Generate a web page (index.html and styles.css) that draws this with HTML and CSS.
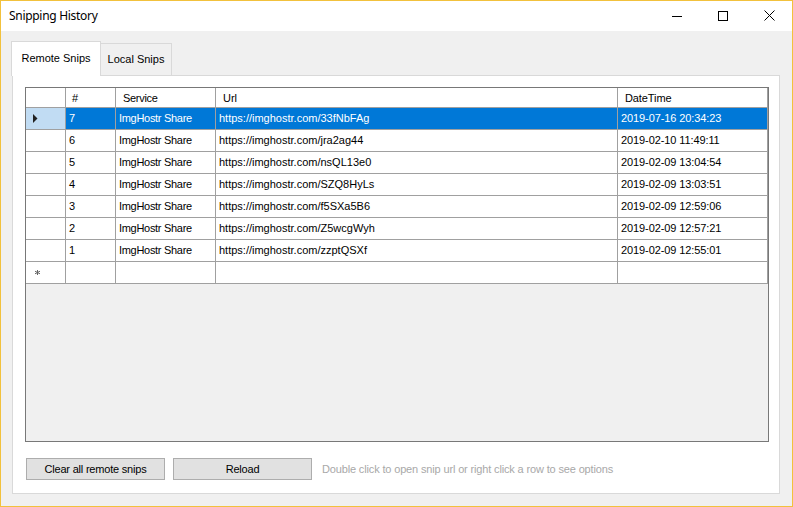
FILE: index.html
```html
<!DOCTYPE html>
<html>
<head>
<meta charset="utf-8">
<link rel="stylesheet" href="styles.css">
</head>
<body>
<div class="window">
  <div class="titlebar">
    <div class="title">Snipping History</div>
    <div class="caption-buttons">
      <div class="cbtn"><svg width="10" height="10" viewBox="0 0 10 10"><path d="M0 5.5H10" stroke="#000" stroke-width="1"/></svg></div>
      <div class="cbtn"><svg width="10" height="10" viewBox="0 0 10 10"><rect x="0.5" y="0.5" width="9" height="9" fill="none" stroke="#000" stroke-width="1"/></svg></div>
      <div class="cbtn"><svg width="11" height="11" viewBox="0 0 11 11"><path d="M0.5 0.5L10.5 10.5M10.5 0.5L0.5 10.5" stroke="#000" stroke-width="1"/></svg></div>
    </div>
  </div>
  <div class="client">
    <div class="tabstrip">
      <div class="tab active">Remote Snips</div>
      <div class="tab">Local Snips</div>
    </div>
    <div class="tabpage">
      <div class="grid">
        <div class="table">
          <div class="row header">
            <div class="cell rh"></div>
            <div class="cell c1">#</div>
            <div class="cell c2">Service</div>
            <div class="cell c3">Url</div>
            <div class="cell c4">DateTime</div>
          </div>
          <div class="row selected">
            <div class="cell rh"><svg width="5" height="9" viewBox="0 0 5 9"><path d="M0 0L4.5 4.5L0 9Z" fill="#222"/></svg></div>
            <div class="cell c1">7</div>
            <div class="cell c2">ImgHostr Share</div>
            <div class="cell c3">https://imghostr.com/33fNbFAg</div>
            <div class="cell c4">2019-07-16 20:34:23</div>
          </div>
          <div class="row">
            <div class="cell rh"></div>
            <div class="cell c1">6</div>
            <div class="cell c2">ImgHostr Share</div>
            <div class="cell c3">https://imghostr.com/jra2ag44</div>
            <div class="cell c4">2019-02-10 11:49:11</div>
          </div>
          <div class="row">
            <div class="cell rh"></div>
            <div class="cell c1">5</div>
            <div class="cell c2">ImgHostr Share</div>
            <div class="cell c3">https://imghostr.com/nsQL13e0</div>
            <div class="cell c4">2019-02-09 13:04:54</div>
          </div>
          <div class="row">
            <div class="cell rh"></div>
            <div class="cell c1">4</div>
            <div class="cell c2">ImgHostr Share</div>
            <div class="cell c3">https://imghostr.com/SZQ8HyLs</div>
            <div class="cell c4">2019-02-09 13:03:51</div>
          </div>
          <div class="row">
            <div class="cell rh"></div>
            <div class="cell c1">3</div>
            <div class="cell c2">ImgHostr Share</div>
            <div class="cell c3">https://imghostr.com/f5SXa5B6</div>
            <div class="cell c4">2019-02-09 12:59:06</div>
          </div>
          <div class="row">
            <div class="cell rh"></div>
            <div class="cell c1">2</div>
            <div class="cell c2">ImgHostr Share</div>
            <div class="cell c3">https://imghostr.com/Z5wcgWyh</div>
            <div class="cell c4">2019-02-09 12:57:21</div>
          </div>
          <div class="row">
            <div class="cell rh"></div>
            <div class="cell c1">1</div>
            <div class="cell c2">ImgHostr Share</div>
            <div class="cell c3">https://imghostr.com/zzptQSXf</div>
            <div class="cell c4">2019-02-09 12:55:01</div>
          </div>
          <div class="row newrow">
            <div class="cell rh"><svg width="5" height="5" viewBox="0 0 5 5"><path d="M2.5 0V5M0 1.2L5 3.8M5 1.2L0 3.8" stroke="#666" stroke-width="1"/></svg></div>
            <div class="cell c1"></div>
            <div class="cell c2"></div>
            <div class="cell c3"></div>
            <div class="cell c4"></div>
          </div>
        </div>
      </div>
      <div class="actions">
        <button class="btn first">Clear all remote snips</button>
        <button class="btn">Reload</button>
        <span class="hint">Double click to open snip url or right click a row to see options</span>
      </div>
    </div>
  </div>
</div>
</body>
</html>
```

FILE: styles.css
```css
* { box-sizing: border-box; }
html, body { margin: 0; padding: 0; background: #f0f0f0; }
body { font-family: "Liberation Sans", Arial, sans-serif; font-size: 11px; color: #000; }

.window {
  width: 793px;
  height: 507px;
  border: 1px solid #f2c13c;
  background: #f0f0f0;
  display: flex;
  flex-direction: column;
  overflow: hidden;
}

.titlebar {
  height: 30px;
  background: #fff;
  display: flex;
  align-items: center;
  justify-content: space-between;
  flex-shrink: 0;
}
.title {
  font-family: "Noto Sans", "Open Sans", sans-serif;
  font-size: 12px;
  letter-spacing: -0.3px;
  padding-left: 8px;
  padding-bottom: 1px;
  color: #000;
}
.caption-buttons { display: flex; height: 100%; }
.cbtn {
  width: 46px;
  height: 100%;
  display: flex;
  align-items: center;
  justify-content: center;
  padding-bottom: 1px;
}

.client {
  flex: 1;
  padding: 10px 0 0 10px;
  display: flex;
  flex-direction: column;
}

.tabstrip {
  display: flex;
  align-items: flex-end;
  height: 34px;
  position: relative;
  z-index: 1;
}
.tab {
  height: 32px;
  border: 1px solid #d9d9d9;
  border-bottom: none;
  background: #f0f0f0;
  padding: 0 0 2px;
  display: flex;
  align-items: center;
  justify-content: center;
  white-space: nowrap;
  width: 72px;
  margin-left: -1px;
}
.tab.active {
  height: 35px;
  margin-bottom: -1px;
  margin-left: 0;
  background: #fff;
  width: 90px;
  padding-bottom: 2px;
  position: relative;
  z-index: 2;
}

.tabpage {
  margin-left: 1px;
  width: 768px;
  height: 419px;
  border: 1px solid #d9d9d9;
  background: #fff;
  padding: 11px 0 0 12px;
  display: flex;
  flex-direction: column;
}

.grid {
  width: 744px;
  height: 355px;
  border: 1px solid #787878;
  background: #f0f0f0;
}
.table { display: flex; flex-direction: column; }
.row { display: flex; height: 22px; }
.row.header { height: 20px; }
.cell {
  background: #fff;
  border-right: 1px solid #a0a0a0;
  border-bottom: 1px solid #a0a0a0;
  padding: 0 0 1px 3px;
  display: flex;
  align-items: center;
  white-space: nowrap;
  overflow: hidden;
}
.header .cell { padding-left: 7px; padding-bottom: 0; }
.header .c1 { padding-left: 6px; }
.rh { width: 40px; justify-content: flex-start; padding-left: 6px; }
.c1 { width: 50px; }
.c2 { width: 100px; letter-spacing: -0.3px; }
.c3 { width: 402px; }
.c4 { width: 150px; letter-spacing: -0.1px; }

.selected .cell { background: #0078d7; color: #fff; }
.selected .rh { background: #c1dcf3; padding-left: 7px; }
.newrow .rh { padding-left: 9px; }

.actions {
  display: flex;
  align-items: center;
  margin-top: 16px;
}
.btn {
  font-family: "Liberation Sans", Arial, sans-serif;
  font-size: 11px;
  width: 139px;
  height: 22px;
  background: #e1e1e1;
  border: 1px solid #adadad;
  color: #000;
  padding: 0 0 1px;
  margin: 0 8px 0 0;
  letter-spacing: -0.2px;
}
.btn.first { margin-left: 1px; }
.hint {
  margin-left: 2px;
  color: #a8a8a8;
  padding-bottom: 1px;
  letter-spacing: -0.15px;
}
```
